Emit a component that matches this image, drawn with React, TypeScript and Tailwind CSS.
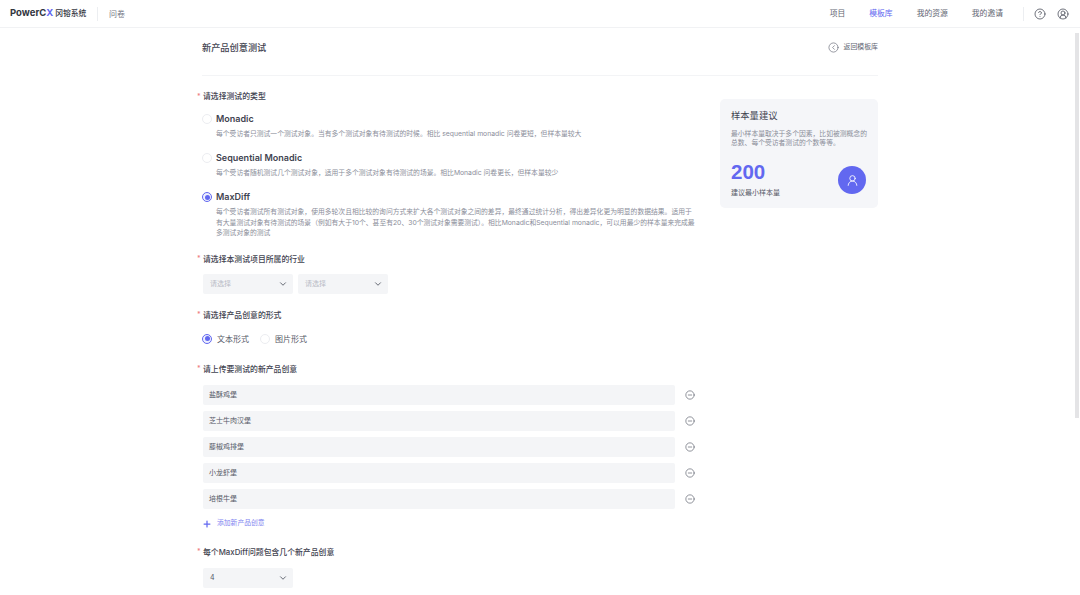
import { ChevronDown, CircleChevronLeft, CircleHelp, CircleMinus, CircleUserRound, Plus, UserRound } from 'lucide-react';

const ideas = ['盐酥鸡堡', '芝士牛肉汉堡', '藤椒鸡排堡', '小龙虾堡', '培根牛堡'];

function Radio({ checked }: { checked?: boolean }) {
  return (
    <span className={`w-[10px] h-[10px] rounded-full border flex items-center justify-center shrink-0 ${checked ? 'border-[#6268f0] bg-[#eef0fe]' : 'border-[#ecedf1] bg-white'}`}>
      {checked && <span className="w-[5px] h-[5px] rounded-full bg-[#6268f0]" />}
    </span>
  );
}

function Label({ text, className }: { text: string; className?: string }) {
  return (
    <div className={`flex items-center h-[12px] text-[7.85px] font-medium text-[#3f4350] ${className ?? ''}`}>
      <span className="w-[6px] text-[#ee7b7f] text-[7px]">*</span>
      {text}
    </div>
  );
}

function Select({ value, muted }: { value: string; muted?: boolean }) {
  return (
    <div className="w-[90px] h-[20px] bg-[#f4f5f7] rounded-[2px] flex items-center justify-between pl-[7px] pr-[5px]">
      <span className={`pt-[2px] text-[7px] ${muted ? 'text-[#b9bcc6]' : 'text-[#555966]'}`}>{value}</span>
      <ChevronDown className="w-[10px] h-[10px] text-[#4b4f5c]" strokeWidth={2} />
    </div>
  );
}

function TestType({ title, checked, lines, className }: { title: string; checked?: boolean; lines: string[]; className?: string }) {
  return (
    <div className={className}>
      <div className="flex items-center gap-[4px] pl-[5px] h-[12px]">
        <Radio checked={checked} />
        <span className="text-[9px] font-semibold text-[#3f4350]">{title}</span>
      </div>
      <div className="pl-[19px] mt-[4px] text-[6.8px] leading-[10.5px] text-[#8b8e9a] whitespace-nowrap">
        {lines.map((line) => (
          <div key={line}>{line}</div>
        ))}
      </div>
    </div>
  );
}

export default function App() {
  return (
    <div className="relative w-[1080px] h-[595px] overflow-hidden bg-white font-['Inter','Noto_Sans_CJK_SC',sans-serif]">
      {/* Header */}
      <header className="h-[28px] border-b border-[#f1f2f4] flex items-center pl-[10px] pr-[11px]">
        <span className="flex items-center gap-[2px] w-[87px] whitespace-nowrap">
          <span className="text-[9.5px] font-bold text-[#33363f]">
            PowerC<span className="text-[#6268f0]">X</span>
          </span>
          <span className="text-[7.8px] font-medium text-[#33363f]">冈镕系统</span>
        </span>
        <span className="w-px h-[14px] bg-[#eceef1]" />
        <span className="ml-[11px] text-[8px] text-[#777a86]">问卷</span>
        <nav className="ml-auto flex items-center gap-[24px] text-[7.8px] text-[#626572]">
          <span>项目</span>
          <span className="text-[#6268f0]">模板库</span>
          <span>我的资源</span>
          <span>我的邀请</span>
        </nav>
        <span className="ml-[20px] w-px h-[14px] bg-[#eceef1]" />
        <CircleHelp className="ml-[10px] w-[12px] h-[12px] text-[#4b4f5c]" strokeWidth={1.6} />
        <CircleUserRound className="ml-[11px] w-[12px] h-[12px] text-[#4b4f5c]" strokeWidth={1.6} />
      </header>

      <main className="pl-[197px] w-[878px]">
        {/* Title row */}
        <div className="ml-[5px] h-[48px] border-b border-[#f3f4f6] flex items-start justify-between">
          <h1 className="mt-[13px] text-[9.2px] font-medium text-[#3f4350] leading-[13px]">新产品创意测试</h1>
          <div className="mt-[14px] flex items-center gap-[5px] text-[6.9px] text-[#626572]">
            <CircleChevronLeft className="w-[11px] h-[11px] text-[#6b6e7a]" strokeWidth={1.5} />
            返回模板库
          </div>
        </div>

        <div className="flex mt-[15px]">
          {/* Form */}
          <div className="w-[498px] shrink-0">
            <Label text="请选择测试的类型" />
            <TestType
              className="mt-[10px]"
              title="Monadic"
              lines={['每个受访者只测试一个测试对象。当有多个测试对象有待测试的时候。相比 sequential monadic 问卷更短，但样本量较大']}
            />
            <TestType
              className="mt-[12.5px]"
              title="Sequential Monadic"
              lines={['每个受访者随机测试几个测试对象，适用于多个测试对象有待测试的场景。相比Monadic 问卷更长，但样本量较少']}
            />
            <TestType
              className="mt-[12.5px]"
              checked
              title="MaxDiff"
              lines={[
                '每个受访者测试所有测试对象，使用多轮次且相比较的询问方式来扩大各个测试对象之间的差异，最终通过统计分析，得出差异化更为明显的数据结果。适用于',
                '有大量测试对象有待测试的场景（例如有大于10个、甚至有20、30个测试对象需要测试）。相比Monadic和Sequential monadic，可以用最少的样本量来完成最',
                '多测试对象的测试',
              ]}
            />

            <Label text="请选择本测试项目所属的行业" className="mt-[15px]" />
            <div className="flex gap-[5px] pl-[6px] mt-[8px]">
              <Select value="请选择" muted />
              <Select value="请选择" muted />
            </div>

            <Label text="请选择产品创意的形式" className="mt-[16px]" />
            <div className="flex items-center pl-[5px] mt-[11px] h-[12px] text-[8px] text-[#555966]">
              <Radio checked />
              <span className="ml-[5px]">文本形式</span>
              <span className="ml-[11px]"><Radio /></span>
              <span className="ml-[5px]">图片形式</span>
            </div>

            <Label text="请上传要测试的新产品创意" className="mt-[19px]" />
            <div className="flex flex-col gap-[6px] pl-[6px] mt-[9px]">
              {ideas.map((idea) => (
                <div key={idea} className="flex items-center">
                  <div className="w-[472px] h-[20px] bg-[#f4f5f7] rounded-[2px] flex items-center pl-[6px] pt-[2px] text-[7px] text-[#555966]">
                    {idea}
                  </div>
                  <CircleMinus className="ml-[10px] w-[10px] h-[10px] text-[#5b5f6b]" strokeWidth={1.6} />
                </div>
              ))}
            </div>
            <div className="flex items-center pl-[5px] mt-[9px] h-[12px] text-[6.8px] text-[#7f84f0]">
              <Plus className="w-[10px] h-[10px] text-[#6268f0]" strokeWidth={3} />
              <span className="ml-[5px]">添加新产品创意</span>
            </div>

            <Label text="每个MaxDiff问题包含几个新产品创意" className="mt-[17px]" />
            <div className="pl-[6px] mt-[9px]">
              <Select value="4" />
            </div>
          </div>

          {/* Sample size card */}
          <aside className="ml-[25px] mt-[8px] w-[158px] h-[109px] bg-[#f5f6f9] rounded-[5px] pt-[10px] pl-[11px] pr-[12px] self-start">
            <div className="text-[9.3px] leading-[13px] text-[#3f4350]">样本量建议</div>
            <p className="mt-[7px] text-[6.8px] leading-[9px] text-[#8b8e9a] whitespace-nowrap">
              最小样本量取决于多个因素，比如被测概念的
              <br />
              总数、每个受访者测试的个数等等。
            </p>
            <div className="flex items-end justify-between mt-[13px]">
              <div>
                <div className="font-['Liberation_Sans',sans-serif] text-[20.5px] leading-[24px] font-bold text-[#6268f0]">200</div>
                <div className="mt-[4px] text-[7px] leading-[10px] text-[#555966]">建议最小样本量</div>
              </div>
              <span className="w-[28px] h-[28px] rounded-full bg-[#6268f0] flex items-center justify-center mb-[4px]">
                <UserRound className="w-[13px] h-[13px] text-white" strokeWidth={1.6} />
              </span>
            </div>
          </aside>
        </div>
      </main>

      {/* Page scrollbar thumb */}
      <div className="absolute left-[1075px] top-[33px] w-[4px] h-[385px] bg-[#e4e4e6]" />
    </div>
  );
}
